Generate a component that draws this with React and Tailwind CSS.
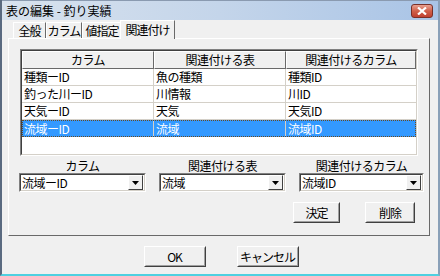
import React from 'react';

const font = { fontFamily: '"MS UI Gothic", "Noto Sans CJK JP", "Liberation Sans", sans-serif' };

const rows = [
  ['種類ーID', '魚の種類', '種類ID'],
  ['釣った川ーID', '川情報', '川ID'],
  ['天気ーID', '天気', '天気ID'],
  ['流域ーID', '流域', '流域ID'],
];

const Tab = ({ label, active, width }) => {
  if (active) {
    return (
      <div
        className="h-[19px] -mb-px -ml-[2px] border-t border-l border-r border-t-white border-l-white border-r-[#696969] bg-[#f0f0f0] flex items-center justify-center relative z-10 whitespace-nowrap tracking-[-1px]"
        style={{ width }}
      >
        {label}
      </div>
    );
  }
  return (
    <div
      className="h-[16px] mt-[2px] border-t border-l border-r border-t-white border-l-white border-r-[#696969] flex items-center justify-center whitespace-nowrap tracking-[-1px]"
      style={{ width }}
    >
      {label}
    </div>
  );
};

const Combo = ({ value, w }) => (
  <div className={`h-[19px] bg-white border border-t-[#808080] border-l-[#808080] border-b-white border-r-white flex items-stretch ${w}`}>
    <div className="flex-1 border border-t-[#404040] border-l-[#404040] border-b-[#d4d0c8] border-r-[#d4d0c8] flex items-center pl-[1px] pr-[1px]">
      <span className="flex-1 whitespace-nowrap leading-[14px] tracking-[-0.5px]">{value}</span>
      <div className="w-[15px] h-[15px] bg-[#f0f0f0] border border-t-white border-l-white border-b-[#404040] border-r-[#404040] flex items-center justify-center">
        <svg width="7" height="4" viewBox="0 0 7 4"><path d="M0 0h7L3.5 4z" fill="#000" /></svg>
      </div>
    </div>
  </div>
);

const Button = ({ children, w }) => (
  <div className={`h-[21px] ${w} border border-t-white border-l-white border-b-[#404040] border-r-[#404040] bg-[#f0f0f0]`}>
    <div className="h-full w-full border border-t-[#f0f0f0] border-l-[#f0f0f0] border-b-[#a0a0a0] border-r-[#a0a0a0] flex items-center justify-center whitespace-nowrap tracking-[-1px]">
      {children}
    </div>
  </div>
);

export default function App() {
  return (
    <div
      className="w-[440px] h-[276px] bg-[#f0f0f0] text-[12px] text-black flex flex-col border-l-2 border-l-[#5a6a80] border-r-2 border-r-[#8aa0b8] border-b-2 border-b-[#4fd0e0] overflow-hidden"
      style={font}
    >
      {/* title bar */}
      <div className="h-[20px] shrink-0 bg-linear-to-r from-[#d8e2ee] via-[#c4d5ea] to-[#a9c4e6] border-t border-t-[#8a9ab0] flex items-center justify-between pl-[4px] pr-[5px]">
        <span className="text-[12px] leading-none whitespace-nowrap">表の編集 - 釣り実績</span>
        <div className="w-[22px] h-[14px] rounded-[3px] bg-linear-to-b from-[#e8a090] via-[#d0604a] to-[#c04030] border border-[#7a3028] flex items-center justify-center">
          <svg width="10" height="8" viewBox="0 0 10 8">
            <path d="M1 0.5L9 7.5M9 0.5L1 7.5" stroke="#fff" strokeWidth="2.2" />
          </svg>
        </div>
      </div>

      {/* tabs */}
      <div className="flex pl-[11px] mt-[1px] h-[17px] shrink-0 items-end">
        <Tab label="全般" width={33} />
        <Tab label="カラム" width={36} />
        <Tab label="値指定" width={40} />
        <Tab label="関連付け" width={55} active />
      </div>

      {/* tab panel */}
      <div className="ml-[6px] w-[422px] h-[198px] shrink-0 border border-t-white border-l-white border-b-[#696969] border-r-[#696969] flex flex-col px-[11px] pt-[10px]">
        {/* table */}
        <div className="w-[398px] h-[107px] shrink-0 bg-white border border-t-[#808080] border-l-[#808080] border-b-white border-r-white">
          <div className="h-full border border-t-[#404040] border-l-[#404040] border-b-[#d4d0c8] border-r-[#d4d0c8] bg-white">
            <div className="grid grid-cols-[132px_132px_1fr] h-[18px] bg-[#f0f0f0]">
              {['カラム', '関連付ける表', '関連付けるカラム'].map((h) => (
                <div
                  key={h}
                  className="border border-t-white border-l-white border-b-[#696969] border-r-[#696969] flex items-center justify-center leading-none whitespace-nowrap tracking-[-0.5px]"
                >
                  {h}
                </div>
              ))}
            </div>
            {rows.map((r, i) => {
              const sel = i === 3;
              return (
                <div
                  key={i}
                  className={`grid grid-cols-[132px_132px_1fr] h-[17px] ${sel ? 'bg-[#3399ff] text-white outline outline-1 outline-dotted outline-[#6a4a20] -outline-offset-1' : 'border-b border-b-[#d4d0c8]'}`}
                >
                  {r.map((c, j) => (
                    <div
                      key={j}
                      className={`flex items-center pl-[2px] leading-none whitespace-nowrap tracking-[-0.5px] ${j < 2 ? 'border-r border-r-[#d4d0c8]' : ''}`}
                    >
                      {c}
                    </div>
                  ))}
                </div>
              );
            })}
          </div>
        </div>

        {/* combos */}
        <div className="flex mt-[3px] -ml-[1px]">
          <div className="flex flex-col w-[127px]">
            <div className="text-center h-[14px] leading-[14px] whitespace-nowrap tracking-[-0.5px]">カラム</div>
            <Combo value="流域ーID" w="w-[127px]" />
          </div>
          <div className="flex flex-col w-[127px] ml-[13px]">
            <div className="text-center h-[14px] leading-[14px] whitespace-nowrap tracking-[-0.5px]">関連付ける表</div>
            <Combo value="流域" w="w-[127px]" />
          </div>
          <div className="flex flex-col w-[125px] ml-[13px]">
            <div className="text-center h-[14px] leading-[14px] whitespace-nowrap tracking-[-0.5px]">関連付けるカラム</div>
            <Combo value="流域ID" w="w-[125px]" />
          </div>
        </div>

        {/* action buttons */}
        <div className="flex justify-end mt-[10px] pr-[3px] gap-[25px]">
          <Button w="w-[47px]">決定</Button>
          <Button w="w-[50px]">削除</Button>
        </div>
      </div>

      {/* OK / cancel */}
      <div className="flex justify-center gap-[31px] mt-[10px] pl-[2px]">
        <Button w="w-[62px]">OK</Button>
        <Button w="w-[62px]">キャンセル</Button>
      </div>
    </div>
  );
}
